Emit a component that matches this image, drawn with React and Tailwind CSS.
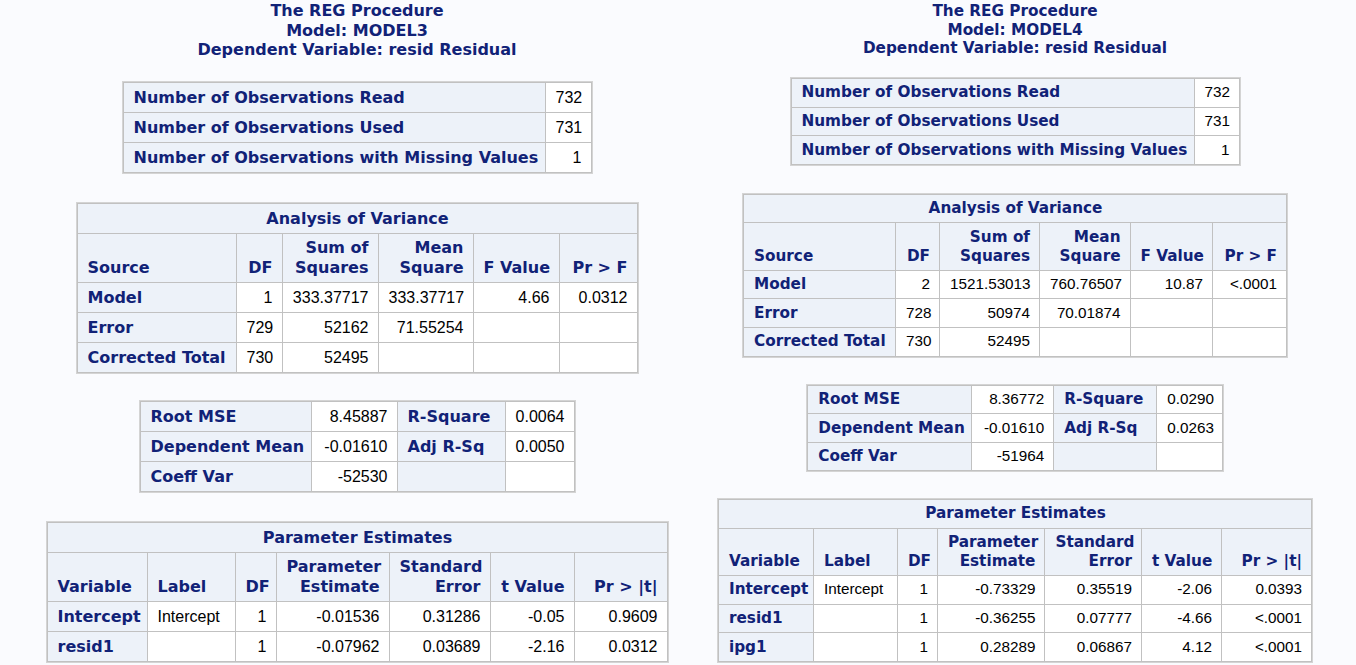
import React from "react";

const V = {
  L: {
    panel: "w-[714px]",
    title: "pt-[1px] text-[16px] leading-[19.5px]",
    font: "text-[16px]",
    row: "h-[30px]",
    hrow: "h-[49px]",
    lead: "leading-[20px]",
    gaps: ["mt-[22.5px]", "mt-[30px]", "mt-[28px]", "mt-[30px]"],
  },
  R: {
    panel: "w-[602px]",
    title: "pt-[2px] text-[15.25px] leading-[18.5px]",
    font: "text-[15.25px]",
    row: "h-[28.6px]",
    hrow: "h-[47.5px]",
    lead: "leading-[19px]",
    gaps: ["mt-[20.5px]", "mt-[29px]", "mt-[28px]", "mt-[27.5px]"],
  },
};

const HF = "font-['DejaVu_Sans',sans-serif] font-bold text-[#112277]";
const DF = "font-['Liberation_Sans',Arial,sans-serif] font-normal text-black";
const CELL = "border border-[#c1c1c1] pl-[10px] pr-[9px] whitespace-nowrap";

function H({ children, align = "left", v, bottom, colSpan }) {
  const a = align === "right" ? "text-right" : align === "center" ? "text-center" : "text-left";
  return (
    <th
      colSpan={colSpan}
      className={`${CELL} ${HF} ${v.font} ${a} bg-[#edf2f9] ${bottom ? "align-bottom pb-[4px] " + v.lead : "align-middle"}`}
    >
      {children}
    </th>
  );
}

function D({ children, align = "right", v }) {
  const a = align === "right" ? "text-right" : "text-left";
  return <td className={`${CELL} ${DF} ${v.font} ${a} bg-white align-middle`}>{children}</td>;
}

function Table({ v, cols, width, title, header, rows, className }) {
  return (
    <table className={`mx-auto table-fixed border-collapse shadow-[0_0_0_1px_#d4d4d4] ${width} ${className}`}>
      <colgroup>
        {cols.map((c, i) => (
          <col key={i} className={c} />
        ))}
      </colgroup>
      <thead>
        {title && (
          <tr className={v.row}>
            <H v={v} align="center" colSpan={cols.length}>
              {title}
            </H>
          </tr>
        )}
        {header && (
          <tr className={v.hrow}>
            {header.map((h, i) => (
              <H key={i} v={v} align={h.a} bottom>
                {h.t.split("\n").map((ln, j, arr) => (
                  <React.Fragment key={j}>
                    {ln}
                    {j < arr.length - 1 && <br />}
                  </React.Fragment>
                ))}
              </H>
            ))}
          </tr>
        )}
      </thead>
      <tbody>
        {rows.map((r, i) => (
          <tr key={i} className={v.row}>
            {r.map((c, j) =>
              c.h ? (
                <H key={j} v={v}>
                  {c.t}
                </H>
              ) : (
                <D key={j} v={v} align={c.a}>
                  {c.t}
                </D>
              )
            )}
          </tr>
        ))}
      </tbody>
    </table>
  );
}

const h = (t) => ({ h: true, t });
const d = (t, a = "right") => ({ t, a });

function Panel({ v, p }) {
  return (
    <div className={`${v.panel} shrink-0`}>
      <div className={`${HF} ${v.title} text-center`}>
        <div>The REG Procedure</div>
        <div>Model: {p.model}</div>
        <div>Dependent Variable: resid Residual</div>
      </div>
      <Table
        v={v}
        className={v.gaps[0]}
        cols={p.obsCols}
        width={p.obsW}
        rows={[
          [h("Number of Observations Read"), d("732")],
          [h("Number of Observations Used"), d("731")],
          [h("Number of Observations with Missing Values"), d("1")],
        ]}
      />
      <Table
        v={v}
        className={v.gaps[1]}
        cols={p.anCols}
        width={p.anW}
        title="Analysis of Variance"
        header={[
          { t: "Source", a: "left" },
          { t: "DF", a: "right" },
          { t: "Sum of\nSquares", a: "right" },
          { t: "Mean\nSquare", a: "right" },
          { t: "F Value", a: "right" },
          { t: "Pr > F", a: "right" },
        ]}
        rows={p.anRows}
      />
      <Table v={v} className={v.gaps[2]} cols={p.fitCols} width={p.fitW} rows={p.fitRows} />
      <Table
        v={v}
        className={v.gaps[3]}
        cols={p.peCols}
        width={p.peW}
        title="Parameter Estimates"
        header={[
          { t: "Variable", a: "left" },
          { t: "Label", a: "left" },
          { t: "DF", a: "right" },
          { t: "Parameter\nEstimate", a: "right" },
          { t: "Standard\nError", a: "right" },
          { t: "t Value", a: "right" },
          { t: "Pr > |t|", a: "right" },
        ]}
        rows={p.peRows}
      />
    </div>
  );
}

const LEFT = {
  model: "MODEL3",
  obsCols: ["w-[422px]", "w-[46px]"],
  obsW: "w-[468px]",
  anCols: ["w-[159px]", "w-[46px]", "w-[96px]", "w-[95px]", "w-[86px]", "w-[78px]"],
  anW: "w-[560px]",
  anRows: [
    [h("Model"), d("1"), d("333.37717"), d("333.37717"), d("4.66"), d("0.0312")],
    [h("Error"), d("729"), d("52162"), d("71.55254"), d(""), d("")],
    [h("Corrected Total"), d("730"), d("52495"), d(""), d(""), d("")],
  ],
  fitCols: ["w-[171px]", "w-[86px]", "w-[108px]", "w-[69px]"],
  fitW: "w-[434px]",
  fitRows: [
    [h("Root MSE"), d("8.45887"), h("R-Square"), d("0.0064")],
    [h("Dependent Mean"), d("-0.01610"), h("Adj R-Sq"), d("0.0050")],
    [h("Coeff Var"), d("-52530"), h(""), d("")],
  ],
  peCols: ["w-[100px]", "w-[88px]", "w-[41px]", "w-[113px]", "w-[101px]", "w-[84px]", "w-[93px]"],
  peW: "w-[620px]",
  peRows: [
    [h("Intercept"), d("Intercept", "left"), d("1"), d("-0.01536"), d("0.31286"), d("-0.05"), d("0.9609")],
    [h("resid1"), d("", "left"), d("1"), d("-0.07962"), d("0.03689"), d("-2.16"), d("0.0312")],
  ],
};

const RIGHT = {
  model: "MODEL4",
  obsCols: ["w-[403px]", "w-[45px]"],
  obsW: "w-[448px]",
  anCols: ["w-[152px]", "w-[44px]", "w-[100px]", "w-[90.5px]", "w-[82.5px]", "w-[74px]"],
  anW: "w-[543px]",
  anRows: [
    [h("Model"), d("2"), d("1521.53013"), d("760.76507"), d("10.87"), d("<.0001")],
    [h("Error"), d("728"), d("50974"), d("70.01874"), d(""), d("")],
    [h("Corrected Total"), d("730"), d("52495"), d(""), d(""), d("")],
  ],
  fitCols: ["w-[164px]", "w-[82px]", "w-[103px]", "w-[65.5px]"],
  fitW: "w-[414.5px]",
  fitRows: [
    [h("Root MSE"), d("8.36772"), h("R-Square"), d("0.0290")],
    [h("Dependent Mean"), d("-0.01610"), h("Adj R-Sq"), d("0.0263")],
    [h("Coeff Var"), d("-51964"), h(""), d("")],
  ],
  peCols: ["w-[95px]", "w-[84px]", "w-[40px]", "w-[107.5px]", "w-[96.5px]", "w-[80px]", "w-[90px]"],
  peW: "w-[593px]",
  peRows: [
    [h("Intercept"), d("Intercept", "left"), d("1"), d("-0.73329"), d("0.35519"), d("-2.06"), d("0.0393")],
    [h("resid1"), d("", "left"), d("1"), d("-0.36255"), d("0.07777"), d("-4.66"), d("<.0001")],
    [h("ipg1"), d("", "left"), d("1"), d("0.28289"), d("0.06867"), d("4.12"), d("<.0001")],
  ],
};

export default function App() {
  return (
    <div className="w-[1356px] h-[665px] overflow-hidden bg-[#fafbfe] flex">
      <Panel v={V.L} p={LEFT} />
      <Panel v={V.R} p={RIGHT} />
    </div>
  );
}
